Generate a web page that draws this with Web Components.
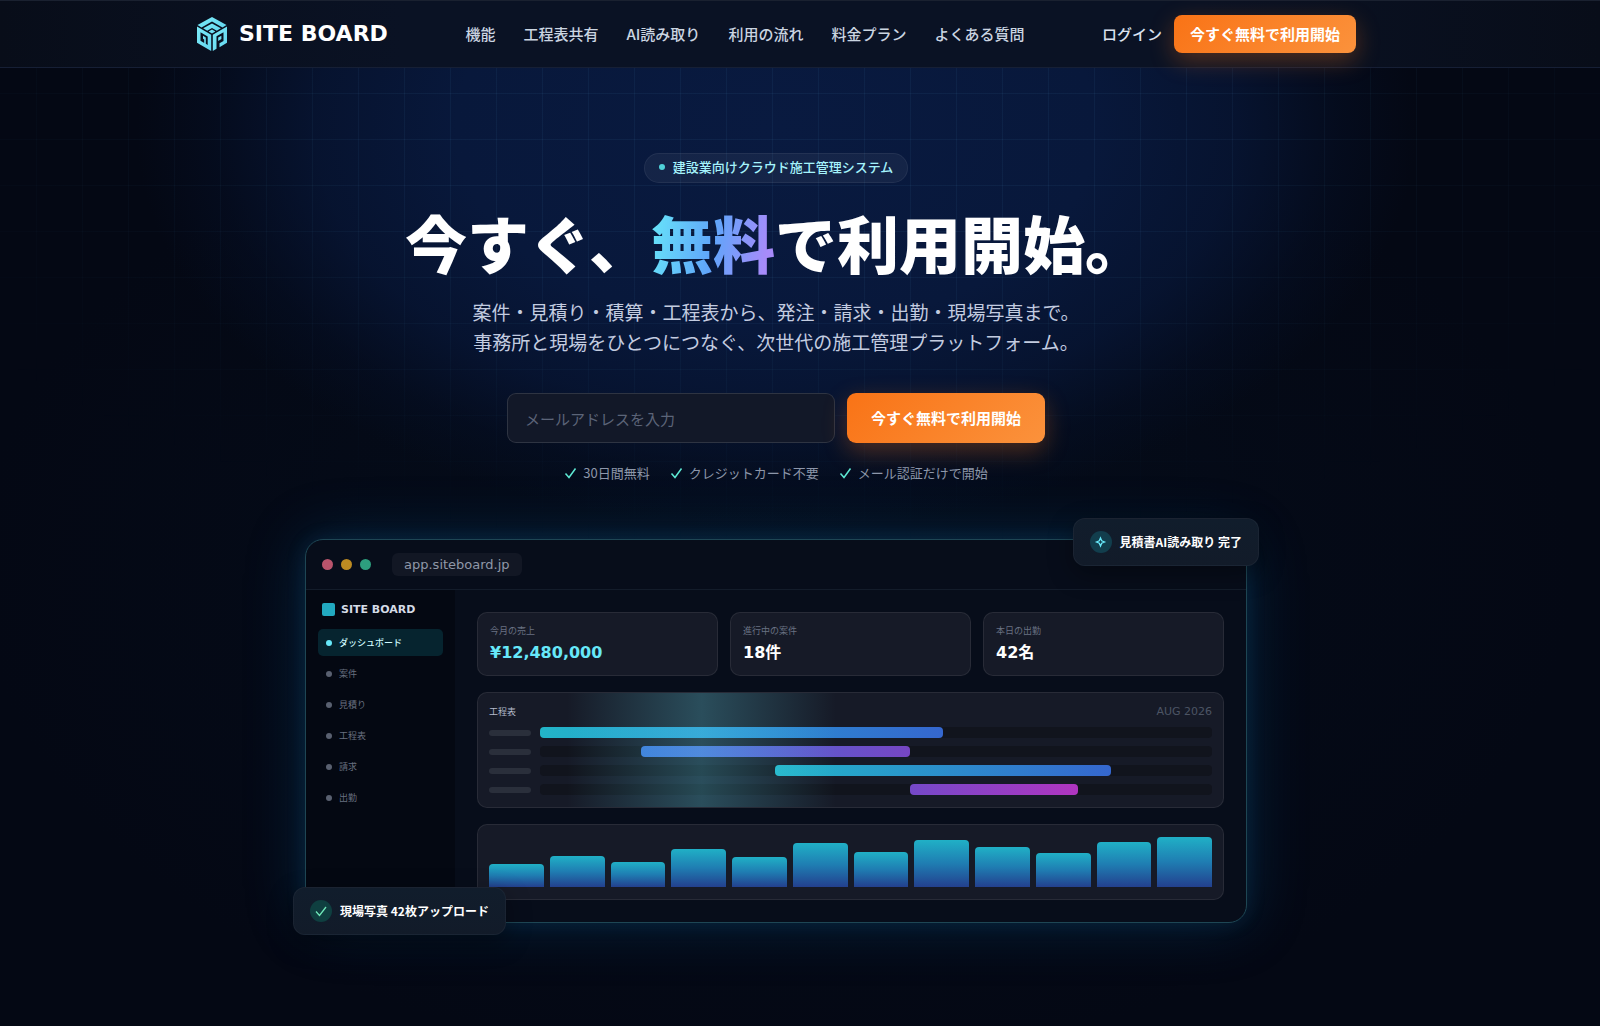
<!DOCTYPE html>
<html lang="ja">
<head>
<meta charset="utf-8">
<meta name="viewport" content="width=device-width, initial-scale=1">
<title>SITE BOARD</title>
<style>
  :root {
    --sb-bg: #040814;
    --sb-cyan: #67e8f9;
    --sb-orange: linear-gradient(135deg, #f97316, #fb923c);
    --sb-line: rgba(255, 255, 255, 0.08);
    --sb-card: #161a27;
    --sb-font: "Noto Sans CJK JP", sans-serif;
    --sb-display: "DejaVu Sans", "Noto Sans CJK JP", sans-serif;
    --sb-gutter: 48px;
  }
  body {
    margin: 0;
    min-height: 100vh;
    background: var(--sb-bg);
    color: #fff;
    font-family: var(--sb-font);
    overflow-x: hidden;
  }
</style>
</head>
<body>
<sb-header></sb-header>
<sb-hero>
  <sb-app-window url="app.siteboard.jp">
    <sb-toast slot="top" kind="spark">見積書AI読み取り 完了</sb-toast>
    <sb-toast slot="bottom" kind="check">現場写真 42枚アップロード</sb-toast>
  </sb-app-window>
</sb-hero>

<script>
/** <sb-button> — orange call to action. Attribute: size ("sm"|"lg") */
class SbButton extends HTMLElement {
  constructor() {
    super();
    this.attachShadow({ mode: 'open' }).innerHTML = `
      <style>
        :host { display: block; flex-shrink: 0; }
        button {
          display: block; height: 38px; padding: 0 16px;
          border: 0; border-radius: 8px;
          background: var(--sb-orange); color: #fff;
          font: 700 15px/24px var(--sb-font);
          white-space: nowrap; cursor: pointer;
          box-shadow: 0 8px 24px rgba(249, 115, 22, 0.3);
        }
        :host([size="lg"]) button { height: 50px; padding: 0 24px; border-radius: 9px; }
      </style>
      <button type="button"><slot></slot></button>
    `;
  }
}

/** <sb-header> — brand, main navigation, login and sign-up. */
class SbHeader extends HTMLElement {
  constructor() {
    super();
    this.attachShadow({ mode: 'open' });
    this._links = ['機能', '工程表共有', 'AI読み取り', '利用の流れ', '料金プラン', 'よくある質問'];
  }

  connectedCallback() {
    this.shadowRoot.innerHTML = `
      <style>
        :host {
          display: block; position: relative; z-index: 2;
          background: linear-gradient(90deg, #080d19, #0a1224 25%, #0a1224 75%, #080d19);
          border-top: 1px solid #1a2130;
          border-bottom: 1px solid #161f35;
          padding-right: var(--sb-gutter);
        }
        .bar {
          display: flex; align-items: center; justify-content: space-between;
          max-width: 1160px; height: 66px; margin: 0 auto;
        }
        .brand {
          display: flex; align-items: center; gap: 11px; min-width: 191px;
          color: #fff; text-decoration: none;
          font: 700 22px/32px var(--sb-display);
        }
        .brand svg { width: 32px; height: 34px; }
        nav { display: flex; gap: 28px; }
        nav a, .login { color: #cbd5e1; text-decoration: none; font-size: 15px; line-height: 24px; font-weight: 500; white-space: nowrap; }
        .actions { display: flex; align-items: center; gap: 12px; }
        .login { color: #dbe2f0; }
      </style>
      <div class="bar">
        <a class="brand" href="#">
          <svg viewBox="0 0 32 34" aria-hidden="true">
            <defs><linearGradient id="g" x1="0" y1="0" x2="1" y2="1"><stop offset="0" stop-color="#7cebf8"/><stop offset="1" stop-color="#62d5ee"/></linearGradient></defs>
            <g fill="url(#g)">
              <path d="M16 0 30.500 8 26.500 10.400 16 4.600 5.500 10.400 1.500 8Z"/>
              <path d="M16 6.400 24.800 11.300 20.800 13.700 16 11 11.200 13.700 7.200 11.300Z"/>
              <path d="M16 12.600 19.400 14.500 16 16.500 12.600 14.500Z"/>
              <path fill-rule="evenodd" d="M1 9.500 15.200 17.700V34L1 25.800ZM4.500 15.200V23.800L8.200 26V22.400L7 21.700V18.800L9.800 20.400V26.800L11.700 28V19.400Z"/>
              <path d="M31 9.500V25.800L23.500 30.200V26.300L27.500 24V15.200L20.500 19.300V31.800L16.800 34V17.700Z"/>
              <path d="M22.200 20.500 25.400 18.700V22.100L22.200 24Z"/>
            </g>
          </svg>
          <span>SITE BOARD</span>
        </a>
        <nav aria-label="メイン">${this._links.map(l => `<a href="#">${l}</a>`).join('')}</nav>
        <div class="actions">
          <a class="login" href="#">ログイン</a>
          <sb-button>今すぐ無料で利用開始</sb-button>
        </div>
      </div>
    `;
  }
}

/** <sb-hero> — headline, e-mail form and assurances; the slot takes the product preview. */
class SbHero extends HTMLElement {
  constructor() {
    super();
    this.attachShadow({ mode: 'open' });
    this._points = ['30日間無料', 'クレジットカード不要', 'メール認証だけで開始'];
  }

  connectedCallback() {
    this.shadowRoot.innerHTML = `
      <style>
        :host {
          display: block; position: relative;
          padding: 85px var(--sb-gutter) 102px 0;
          background:
            radial-gradient(640px 400px at calc(50% - 24px) 60px, #091a40 0%, #08183b 50%, rgba(7, 21, 52, 0.85) 72%, rgba(5, 15, 38, 0.5) 88%, transparent 100%),
            radial-gradient(800px 500px at calc(50% - 24px) 500px, rgba(5, 20, 38, 0.4), transparent);
        }
        .grid {
          position: absolute; inset: 0; pointer-events: none;
          background-image:
            linear-gradient(90deg, rgba(103, 200, 249, 0.06) 1px, transparent 1px),
            linear-gradient(rgba(103, 200, 249, 0.06) 1px, transparent 1px);
          background-size: 46px 46px;
          background-position: 36px 25px;
          -webkit-mask-image: radial-gradient(1000px 460px at 50% 30px, #000 40%, transparent);
          mask-image: radial-gradient(1000px 460px at 50% 30px, #000 40%, transparent);
        }
        .content { position: relative; display: flex; flex-direction: column; align-items: center; text-align: center; }
        .badge {
          display: flex; align-items: center; gap: 8px;
          padding: 3px 14px 5px;
          border: 1px solid rgba(255, 255, 255, 0.06); border-radius: 16px;
          background: rgba(255, 255, 255, 0.05);
          color: #a5f3fc; font-size: 13px; line-height: 20px; font-weight: 500;
        }
        .badge i { width: 6px; height: 6px; border-radius: 50%; background: #4fd1d9; }
        h1 { margin: 22px 0 0; font-size: 62px; line-height: 74px; font-weight: 900; }
        h1 em {
          font-style: normal; color: transparent;
          background: linear-gradient(100deg, #67e8f9 0%, #60a5fa 50%, #a78bfa 90%);
          -webkit-background-clip: text; background-clip: text;
        }
        p { margin: 18px 0 0; color: #c3cce0; font-size: 19px; line-height: 30px; }
        form { display: flex; gap: 12px; margin-top: 36px; }
        input {
          box-sizing: border-box; width: 328px; height: 50px; padding: 0 17px;
          border: 1px solid rgba(255, 255, 255, 0.12); border-radius: 9px;
          background: #121828; color: #fff;
          font: 400 15px/24px var(--sb-font);
        }
        input::placeholder { color: #5c6478; opacity: 1; }
        ul { display: flex; gap: 20px; margin: 19px 0 0; padding: 0; list-style: none; }
        li { display: flex; align-items: center; gap: 6px; color: #8d97aa; font-size: 13px; line-height: 22px; }
        li svg { width: 13px; height: 12px; fill: none; stroke: #5eead4; stroke-width: 1.5; }
        ::slotted(*) { margin-top: 55px; }
      </style>
      <div class="grid"></div>
      <div class="content">
        <div class="badge"><i></i><span>建設業向けクラウド施工管理システム</span></div>
        <h1>今すぐ、<em>無料</em>で利用開始。</h1>
        <p>案件・見積り・積算・工程表から、発注・請求・出勤・現場写真まで。<br>事務所と現場をひとつにつなぐ、次世代の施工管理プラットフォーム。</p>
        <form>
          <input type="email" placeholder="メールアドレスを入力" aria-label="メールアドレス">
          <sb-button size="lg">今すぐ無料で利用開始</sb-button>
        </form>
        <ul>
          ${this._points.map(p => `<li><svg viewBox="0 0 13 12" aria-hidden="true"><path d="M1.500 6.500 5 10.500 11.500 1.500"/></svg><span>${p}</span></li>`).join('')}
        </ul>
        <slot></slot>
      </div>
    `;
  }
}

/** <sb-toast> — floating notice. Attribute: kind ("spark"|"check") */
class SbToast extends HTMLElement {
  constructor() {
    super();
    this.attachShadow({ mode: 'open' });
  }

  connectedCallback() {
    const check = this.getAttribute('kind') === 'check';
    const icon = check
      ? '<path d="M6 11.500 9.500 15.500 16 7"/>'
      : '<path d="M9.500 7 10.700 9.800 13.500 11 10.700 12.200 9.500 15 8.300 12.200 5.500 11 8.300 9.800Z"/>';
    this.shadowRoot.innerHTML = `
      <style>
        :host {
          display: flex; align-items: center; gap: 8px;
          box-sizing: border-box; height: 48px; padding: 0 16px;
          border: 1px solid rgba(255, 255, 255, 0.04); border-radius: 12px;
          background: linear-gradient(#111d2c, #121b29);
          box-shadow: 0 8px 24px rgba(0, 0, 0, 0.35);
          color: #fff; font-size: 12px; line-height: 20px; font-weight: 700; white-space: nowrap;
        }
        svg {
          width: 22px; height: 22px; border-radius: 50%; fill: none;
          background: ${check ? '#0f3f40' : '#123e4d'};
          stroke: ${check ? '#6ee7b7' : '#67e8f9'}; stroke-width: 1.3;
        }
      </style>
      <svg viewBox="${check ? '0 0 22 22' : '-1 0 22 22'}" aria-hidden="true">${icon}</svg>
      <span><slot></slot></span>
    `;
  }
}

/** <sb-stat> — label and figure. Attributes: label, value, accent */
class SbStat extends HTMLElement {
  constructor() {
    super();
    this.attachShadow({ mode: 'open' });
  }

  connectedCallback() {
    this.shadowRoot.innerHTML = `
      <style>
        :host {
          display: block; flex: 1; padding: 11px 12px;
          border: 1px solid var(--sb-line); border-radius: 10px; background: var(--sb-card);
        }
        .label { color: #697182; font-size: 9px; line-height: 14px; }
        .value { margin-top: 4px; font: 700 16px/22px var(--sb-display); color: #fff; }
        :host([accent]) .value { color: var(--sb-cyan); }
      </style>
      <div class="label">${this.getAttribute('label')}</div>
      <div class="value">${this.getAttribute('value')}</div>
    `;
  }
}

/** <sb-gantt> — schedule card. Property: rows (Array of { start, span, color }) in percent */
class SbGantt extends HTMLElement {
  constructor() {
    super();
    this.attachShadow({ mode: 'open' });
    this._rows = [
      { start: 0, span: 60, color: 'linear-gradient(90deg, #22b5c8, #2a8fd0 50%, #3567cf)' },
      { start: 15, span: 40, color: 'linear-gradient(90deg, #3b76d8, #7646c4)' },
      { start: 35, span: 50, color: 'linear-gradient(90deg, #22b5c8, #3567cf)' },
      { start: 55, span: 25, color: 'linear-gradient(90deg, #7549c9, #b035c0)' },
    ];
  }

  set rows(val) { this._rows = val || []; this.render(); }
  get rows() { return this._rows; }

  connectedCallback() { this.render(); }

  render() {
    this.shadowRoot.innerHTML = `
      <style>
        :host {
          display: block; position: relative; overflow: hidden; padding: 12px 11px;
          border: 1px solid var(--sb-line); border-radius: 10px; background: var(--sb-card);
        }
        .head { display: flex; justify-content: space-between; align-items: center; margin-bottom: 8px; line-height: 14px; }
        .title { color: #b4bccb; font-size: 9px; }
        .month { color: #4c5464; font: 400 11px/14px var(--sb-display); }
        .rows { display: flex; flex-direction: column; gap: 8px; }
        .row { display: flex; align-items: center; gap: 9px; }
        .name { width: 42px; height: 6px; border-radius: 3px; background: #2a2f3b; }
        .track { flex: 1; height: 11px; border-radius: 4px; background: #11141d; }
        .fill { height: 100%; border-radius: 4px; }
        .scan {
          position: absolute; top: 0; bottom: 0; left: 12%; width: 36%;
          background: linear-gradient(90deg, transparent, rgba(103, 232, 249, 0.25), transparent);
        }
      </style>
      <div class="head"><span class="title">工程表</span><span class="month">AUG 2026</span></div>
      <div class="rows">
        ${this._rows.map(r => `
          <div class="row">
            <span class="name"></span>
            <div class="track"><div class="fill" style="margin-left: ${r.start}%; width: ${r.span}%; background: ${r.color};"></div></div>
          </div>
        `).join('')}
      </div>
      <div class="scan"></div>
    `;
  }
}

/** <sb-bars> — column chart. Attribute: values (comma separated percentages) */
class SbBars extends HTMLElement {
  constructor() {
    super();
    this.attachShadow({ mode: 'open' });
  }

  connectedCallback() {
    const values = (this.getAttribute('values') || '').split(',').map(Number);
    this.shadowRoot.innerHTML = `
      <style>
        :host {
          display: flex; align-items: flex-end; gap: 6px; height: 50px; padding: 12px 11px;
          border: 1px solid var(--sb-line); border-radius: 10px; background: var(--sb-card);
        }
        .bar { flex: 1; border-radius: 4px 4px 0 0; background: linear-gradient(#20b0c6, #1f7db2 50%, #23408e); }
      </style>
      ${values.map(v => `<div class="bar" style="height: ${v}%;"></div>`).join('')}
    `;
  }
}

/**
 * <sb-app-window> — browser frame with the dashboard inside.
 * Attribute: url. Slots: top, bottom (toasts over the corners)
 */
class SbAppWindow extends HTMLElement {
  constructor() {
    super();
    this.attachShadow({ mode: 'open' });
    this._menu = ['ダッシュボード', '案件', '見積り', '工程表', '請求', '出勤'];
  }

  connectedCallback() {
    this.shadowRoot.innerHTML = `
      <style>
        :host {
          display: block; position: relative; box-sizing: border-box;
          width: 100%; max-width: 942px; text-align: left;
          border: 1px solid #1e4654; border-radius: 18px;
          background: #070d1a;
          box-shadow: 0 0 60px rgba(14, 100, 160, 0.28), 0 0 20px rgba(34, 150, 200, 0.14);
        }
        .chrome { display: flex; align-items: center; height: 49px; padding: 0 16px; gap: 8px; border-bottom: 1px solid #131c2a; }
        .dot { width: 11px; height: 11px; border-radius: 50%; }
        .url {
          margin-left: 13px; padding: 0 12px; border-radius: 6px;
          background: #121724; color: #8f98a8;
          font: 400 13px/23px var(--sb-display);
        }
        .body { display: flex; }
        aside { box-sizing: border-box; width: 149px; padding: 12px; background: #040812; border-bottom-left-radius: 17px; }
        .brand { display: flex; align-items: center; gap: 6px; padding: 0 4px; margin-bottom: 12px; font: 700 11px/15px var(--sb-display); color: #d5dbe6; white-space: nowrap; }
        .brand i { width: 13px; height: 13px; border-radius: 2px; background: #22a9c0; }
        .menu { display: flex; flex-direction: column; gap: 4px; }
        .menu a {
          display: flex; align-items: center; gap: 7px; height: 27px; padding: 0 8px;
          border-radius: 5px; color: #687080; font-size: 9px; text-decoration: none;
        }
        .menu i { width: 6px; height: 6px; border-radius: 50%; background: #596070; }
        .menu a[aria-current] { background: #06242f; color: #cffafe; font-weight: 500; }
        .menu a[aria-current] i { background: var(--sb-cyan); }
        main { flex: 1; display: flex; flex-direction: column; gap: 16px; padding: 22px; }
        .stats { display: flex; gap: 12px; }
        ::slotted([slot="top"]) { position: absolute; top: -22px; right: -13px; }
        ::slotted([slot="bottom"]) { position: absolute; bottom: -13px; left: -13px; }
      </style>
      <div class="chrome">
        <span class="dot" style="background: #b9546c;"></span>
        <span class="dot" style="background: #bd8b22;"></span>
        <span class="dot" style="background: #2d9f7e;"></span>
        <span class="url">${this.getAttribute('url')}</span>
      </div>
      <div class="body">
        <aside>
          <div class="brand"><i></i><span>SITE BOARD</span></div>
          <div class="menu">
            ${this._menu.map((m, n) => `<a href="#"${n ? '' : ' aria-current="page"'}><i></i><span>${m}</span></a>`).join('')}
          </div>
        </aside>
        <main>
          <div class="stats">
            <sb-stat label="今月の売上" value="¥12,480,000" accent></sb-stat>
            <sb-stat label="進行中の案件" value="18件"></sb-stat>
            <sb-stat label="本日の出勤" value="42名"></sb-stat>
          </div>
          <sb-gantt></sb-gantt>
          <sb-bars values="46,62,50,76,60,88,70,94,80,68,90,100"></sb-bars>
        </main>
      </div>
      <slot name="top"></slot>
      <slot name="bottom"></slot>
    `;
  }
}

customElements.define('sb-button', SbButton);
customElements.define('sb-header', SbHeader);
customElements.define('sb-toast', SbToast);
customElements.define('sb-stat', SbStat);
customElements.define('sb-gantt', SbGantt);
customElements.define('sb-bars', SbBars);
customElements.define('sb-app-window', SbAppWindow);
customElements.define('sb-hero', SbHero);
</script>
</body>
</html>
